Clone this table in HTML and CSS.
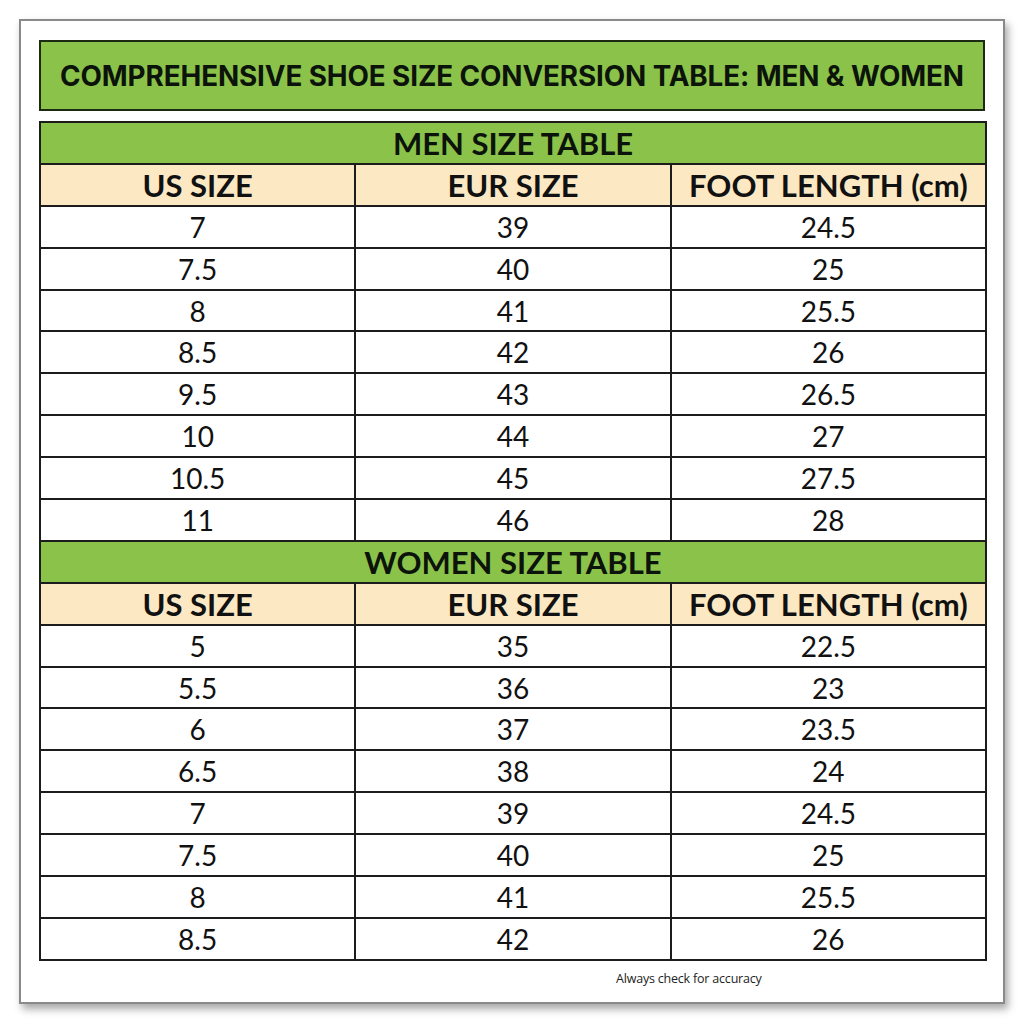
FILE: index.html
```html
<!DOCTYPE html>
<html>
<head>
<meta charset="utf-8">
<link rel="stylesheet" href="styles.css">
</head>
<body>
<div class="card">
  <div class="title">COMPREHENSIVE SHOE SIZE CONVERSION TABLE: MEN &amp; WOMEN</div>
  <table class="sizes">
    <tr class="section"><td colspan="3">MEN SIZE TABLE</td></tr>
    <tr class="head"><td>US SIZE</td><td>EUR SIZE</td><td>FOOT LENGTH (cm)</td></tr>
    <tr><td>7</td><td>39</td><td>24.5</td></tr>
    <tr><td>7.5</td><td>40</td><td>25</td></tr>
    <tr><td>8</td><td>41</td><td>25.5</td></tr>
    <tr><td>8.5</td><td>42</td><td>26</td></tr>
    <tr><td>9.5</td><td>43</td><td>26.5</td></tr>
    <tr><td>10</td><td>44</td><td>27</td></tr>
    <tr><td>10.5</td><td>45</td><td>27.5</td></tr>
    <tr><td>11</td><td>46</td><td>28</td></tr>
    <tr class="section"><td colspan="3">WOMEN SIZE TABLE</td></tr>
    <tr class="head"><td>US SIZE</td><td>EUR SIZE</td><td>FOOT LENGTH (cm)</td></tr>
    <tr><td>5</td><td>35</td><td>22.5</td></tr>
    <tr><td>5.5</td><td>36</td><td>23</td></tr>
    <tr><td>6</td><td>37</td><td>23.5</td></tr>
    <tr><td>6.5</td><td>38</td><td>24</td></tr>
    <tr><td>7</td><td>39</td><td>24.5</td></tr>
    <tr><td>7.5</td><td>40</td><td>25</td></tr>
    <tr><td>8</td><td>41</td><td>25.5</td></tr>
    <tr><td>8.5</td><td>42</td><td>26</td></tr>
  </table>
  <div class="note">Always check for accuracy</div>
</div>
</body>
</html>
```
FILE: styles.css
```css
html, body {
  margin: 0;
  padding: 0;
  background: #ffffff;
}
body {
  width: 1024px;
  height: 1024px;
  padding: 19px 0 0 19px;
  box-sizing: border-box;
}
.card {
  width: 986px;
  height: 985px;
  box-sizing: border-box;
  border: 2px solid #8a8a8a;
  background: #fff;
  box-shadow: 3px 5px 8px rgba(0,0,0,0.35);
  padding: 19px 18px 0 18px;
  display: flex;
  flex-direction: column;
}
.title {
  height: 71px;
  box-sizing: border-box;
  background: #8bc34a;
  border: 2px solid #1d2a12;
  display: flex;
  align-items: center;
  justify-content: center;
  font-family: "Inter", "Noto Sans", sans-serif;
  font-weight: 700;
  font-size: 27.8px;
  color: #0c130a;
  letter-spacing: -0.1px;
}
.sizes {
  margin-top: 10px;
  width: 948px;
  border-collapse: collapse;
  table-layout: fixed;
  font-family: "Lato", "Open Sans", sans-serif;
  font-size: 28px;
  color: #111;
}
.sizes td {
  border: 2px solid #1c1c1c;
  height: 39.9px;
  padding: 0;
  text-align: center;
  vertical-align: middle;
  line-height: 38px;
}
.section td {
  background: #8bc34a;
  font-weight: 700;
  font-size: 31px;
  color: #0c130a;
}
.head td {
  background: #fce9c4;
  font-weight: 700;
  font-size: 31px;
}
.note {
  font-family: "Open Sans", "Liberation Sans", sans-serif;
  font-size: 12.5px;
  color: #222;
  margin-top: 9px;
  padding-left: 577px;
  letter-spacing: -0.2px;
}
```
